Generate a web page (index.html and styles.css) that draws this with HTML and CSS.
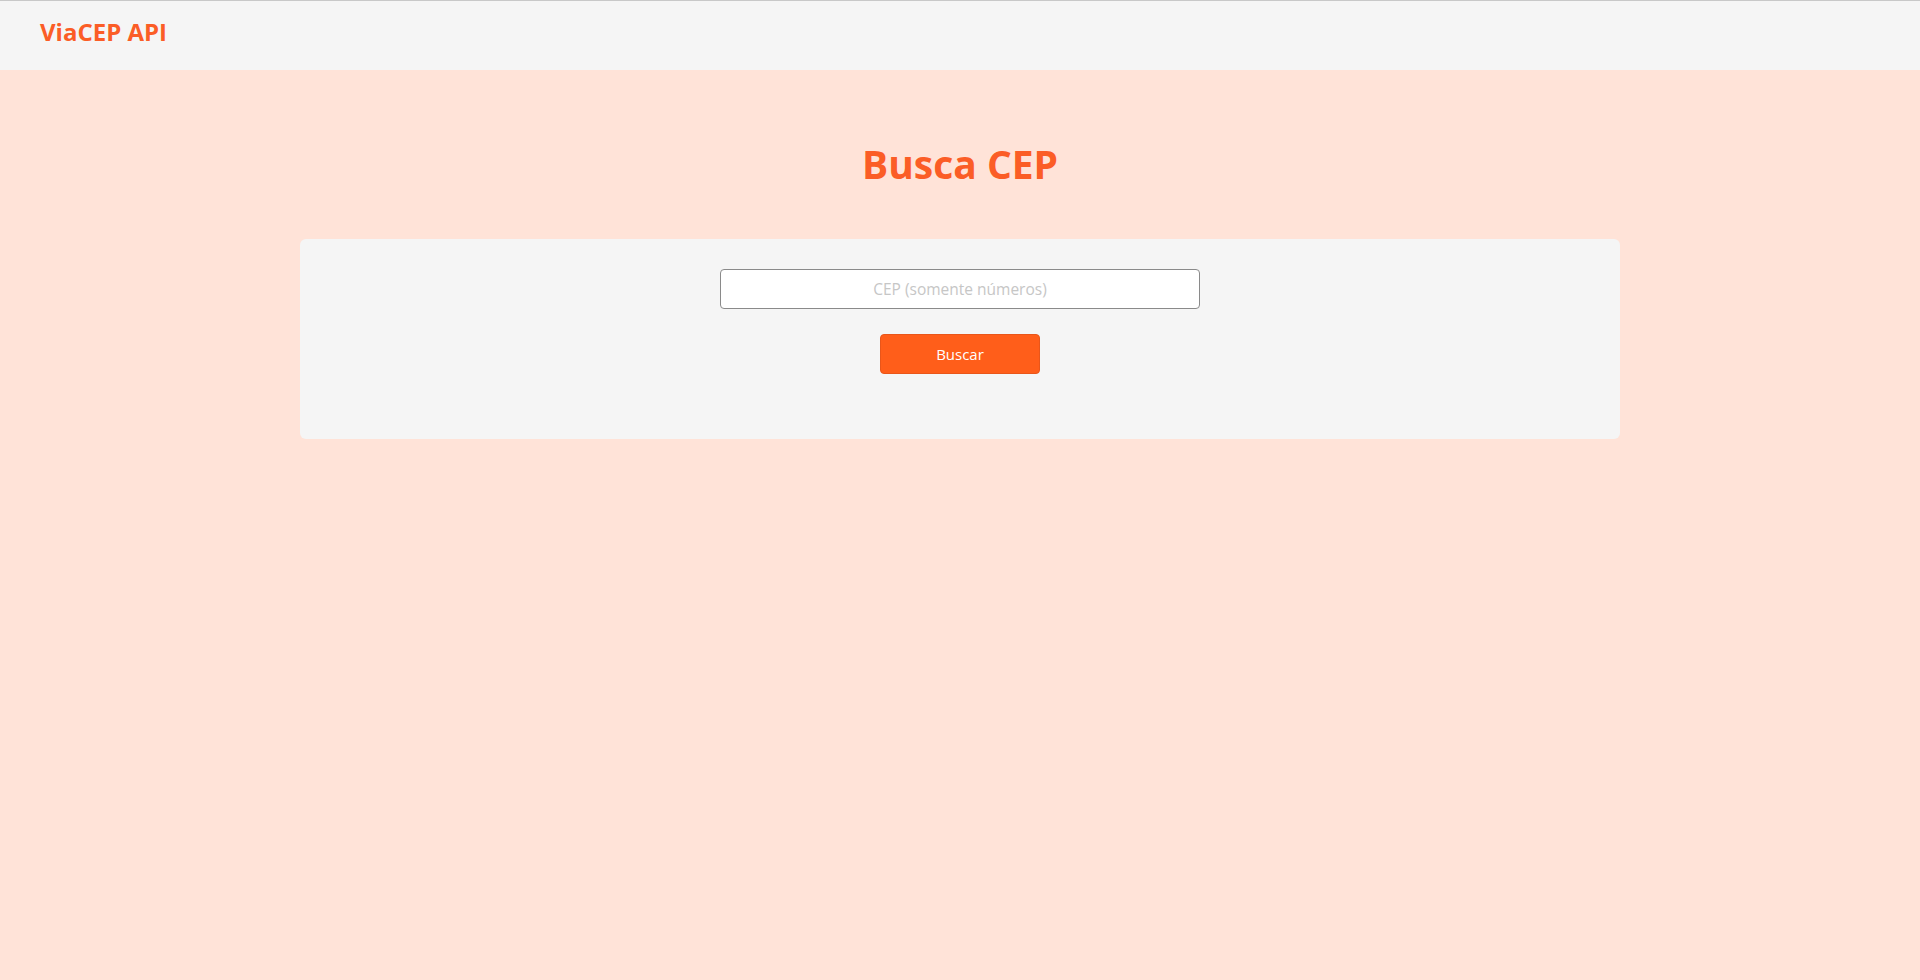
FILE: index.html
```html
<!DOCTYPE html>
<html lang="pt-BR">
<head>
<meta charset="utf-8">
<title>ViaCEP API</title>
<link rel="stylesheet" href="styles.css">
</head>
<body>
<header class="topbar">
  <span class="brand">ViaCEP API</span>
</header>
<main class="main">
  <h1 class="page-title">Busca CEP</h1>
  <section class="card">
    <input class="cep-input" type="text" placeholder="CEP (somente números)">
    <button class="btn-search" type="button">Buscar</button>
    <div class="result"></div>
  </section>
</main>
</body>
</html>
```
FILE: styles.css
```css
* { box-sizing: border-box; }
html, body {
  margin: 0;
  padding: 0;
}
body {
  background: #ffe3d8;
  font-family: "Open Sans", "DejaVu Sans", sans-serif;
  min-height: 980px;
}
.topbar {
  height: 70px;
  background: #f5f5f5;
  border-top: 1px solid #c8c8c8;
  display: flex;
  align-items: flex-start;
  padding: 14px 0 0 40px;
}
.brand {
  color: #fb5d26;
  font-weight: 700;
  font-size: 24px;
  line-height: 33px;
}
.main {
  display: flex;
  flex-direction: column;
  align-items: center;
  padding-top: 68px;
}
.page-title {
  margin: 0;
  color: #fb5d26;
  font-size: 39px;
  font-weight: 700;
  line-height: 52px;
}
.card {
  margin-top: 49px;
  width: 1320px;
  height: 200px;
  background: #f5f5f5;
  border-radius: 6px;
  padding: 30px 0;
  display: flex;
  flex-direction: column;
  align-items: center;
}
.cep-input {
  width: 480px;
  height: 40px;
  border: 1px solid #8a8a8a;
  border-radius: 4px;
  background: #fff;
  text-align: center;
  font-family: "Open Sans", "DejaVu Sans", sans-serif;
  font-size: 15.5px;
  outline: none;
}
.cep-input::placeholder { color: #c6c6c6; }
.btn-search {
  margin-top: 25px;
  width: 160px;
  height: 40px;
  border: 1px solid #e9561a;
  border-radius: 4px;
  background: #ff5e1a;
  color: #fff;
  font-family: "Open Sans", "DejaVu Sans", sans-serif;
  font-size: 15px;
  cursor: pointer;
}
```
